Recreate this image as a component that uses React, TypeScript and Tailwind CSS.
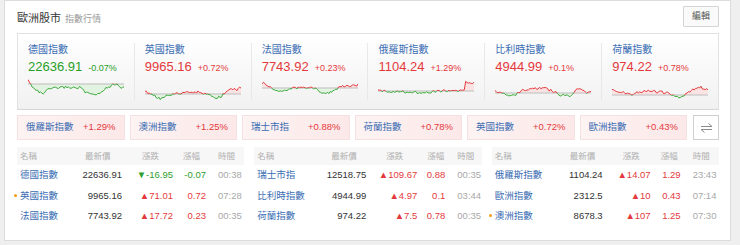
import React from 'react';

type Anchor = [number, number];

const RED = '#e4393c';
const GREEN = '#2f9e2f';

const cards: { name: string; value: string; change: string; up: boolean; base: number; anchors: Anchor[]; seed: number }[] = [
    {
        name: '德國指數', value: '22636.91', change: '-0.07%', up: false, base: 5, seed: 3,
        anchors: [[0, 1], [0.03, 6], [0.1, 12], [0.15, 15], [0.22, 10], [0.3, 9], [0.4, 8], [0.5, 9], [0.55, 8], [0.6, 14], [0.7, 16], [0.75, 14], [0.8, 10], [0.86, 7], [0.9, 5], [0.93, 4], [0.96, 9], [1, 7]],
    },
    {
        name: '英國指數', value: '9965.16', change: '+0.72%', up: true, base: 15, seed: 7,
        anchors: [[0, 13], [0.05, 14], [0.12, 18], [0.17, 20], [0.22, 16], [0.4, 14], [0.55, 13], [0.65, 16], [0.75, 19], [0.8, 17], [0.85, 12], [0.9, 10], [0.95, 11], [1, 8]],
    },
    {
        name: '法國指數', value: '7743.92', change: '+0.23%', up: true, base: 9, seed: 11,
        anchors: [[0, 4], [0.08, 7], [0.15, 12], [0.25, 11], [0.35, 9], [0.45, 8], [0.55, 9], [0.62, 13], [0.7, 14], [0.76, 11], [0.82, 8], [0.88, 6], [0.94, 7], [1, 6]],
    },
    {
        name: '俄羅斯指數', value: '1104.24', change: '+1.29%', up: true, base: 12, seed: 5,
        anchors: [[0, 12], [0.2, 12.5], [0.35, 13], [0.5, 13.5], [0.6, 12.5], [0.7, 11.5], [0.9, 12], [0.91, 3], [1, 3.5]],
    },
    {
        name: '比利時指數', value: '4944.99', change: '+0.1%', up: true, base: 14, seed: 13,
        anchors: [[0, 12], [0.07, 14], [0.15, 18], [0.22, 15], [0.3, 11], [0.5, 9], [0.6, 12], [0.68, 16], [0.78, 17], [0.82, 13], [0.85, 10], [0.93, 11], [0.96, 14], [1, 13]],
    },
    {
        name: '荷蘭指數', value: '974.22', change: '+0.78%', up: true, base: 16, seed: 17,
        anchors: [[0, 10], [0.1, 13], [0.2, 15], [0.35, 12], [0.5, 13], [0.6, 14], [0.66, 18], [0.72, 18], [0.78, 14], [0.85, 10], [0.92, 8], [0.96, 10], [1, 10]],
    },
];

const pills = [
    { name: '俄羅斯指數', pct: '+1.29%' },
    { name: '澳洲指數', pct: '+1.25%' },
    { name: '瑞士市指', pct: '+0.88%' },
    { name: '荷蘭指數', pct: '+0.78%' },
    { name: '英國指數', pct: '+0.72%' },
    { name: '歐洲指數', pct: '+0.43%' },
];

type Row = { name: string; price: string; change: string; pct: string; time: string; up: boolean; dot?: boolean };

const tables: { cols: string; rows: Row[] }[] = [
    {
        cols: 'grid-cols-[63px_46px_51px_33px_34px]',
        rows: [
            { name: '德國指數', price: '22636.91', change: '▼-16.95', pct: '-0.07', time: '00:38', up: false },
            { name: '英國指數', price: '9965.16', change: '▲71.01', pct: '0.72', time: '07:28', up: true, dot: true },
            { name: '法國指數', price: '7743.92', change: '▲17.72', pct: '0.23', time: '00:35', up: true },
        ],
    },
    {
        cols: 'grid-cols-[72px_44px_51px_28px_32px]',
        rows: [
            { name: '瑞士市指', price: '12518.75', change: '▲109.67', pct: '0.88', time: '00:35', up: true },
            { name: '比利時指數', price: '4944.99', change: '▲4.97', pct: '0.1', time: '03:44', up: true },
            { name: '荷蘭指數', price: '974.22', change: '▲7.5', pct: '0.78', time: '00:35', up: true },
        ],
    },
    {
        cols: 'grid-cols-[73px_42px_48px_30px_34px]',
        rows: [
            { name: '俄羅斯指數', price: '1104.24', change: '▲14.07', pct: '1.29', time: '23:43', up: true },
            { name: '歐洲指數', price: '2312.5', change: '▲10', pct: '0.43', time: '07:14', up: true },
            { name: '澳洲指數', price: '8678.3', change: '▲107', pct: '1.25', time: '07:30', up: true, dot: true },
        ],
    },
];

// deterministic wobble so the lines look like intraday ticks
const noise = (i: number, seed: number) => {
    const v = Math.sin(i * 12.9898 + seed * 78.233) * 43758.5453;
    return v - Math.floor(v) - 0.5;
};

const buildPath = (anchors: Anchor[], seed: number, w: number) => {
    const n = 70;
    const pts: string[] = [];
    for (let i = 0; i < n; i++) {
        const t = i / (n - 1);
        let k = 0;
        while (k < anchors.length - 2 && anchors[k + 1][0] < t) k++;
        const [t0, y0] = anchors[k];
        const [t1, y1] = anchors[k + 1];
        const f = t1 === t0 ? 0 : Math.min(1, Math.max(0, (t - t0) / (t1 - t0)));
        const y = Math.min(21.5, Math.max(0.5, y0 + (y1 - y0) * f + noise(i, seed) * 2.4));
        pts.push(`${(t * w).toFixed(1)} ${y.toFixed(1)}`);
    }
    return pts;
};

const Sparkline: React.FC<{ id: number; base: number; anchors: Anchor[]; seed: number }> = ({ id, base, anchors, seed }) => {
    const w = 96;
    const h = 22;
    const pts = buildPath(anchors, seed, w);
    const line = 'M' + pts.join(' L');
    const area = `${line} L${w} ${base} L0 ${base} Z`;
    return (
        <svg width={w} height={h} viewBox={`0 0 ${w} ${h}`} className="block">
            <defs>
                <clipPath id={`up${id}`}>
                    <rect x="0" y="0" width={w} height={base} />
                </clipPath>
                <clipPath id={`dn${id}`}>
                    <rect x="0" y={base} width={w} height={h - base} />
                </clipPath>
            </defs>
            <g clipPath={`url(#up${id})`}>
                <path d={area} fill="#fbe3e3" />
            </g>
            <g clipPath={`url(#dn${id})`}>
                <path d={area} fill="#e3f3e1" />
            </g>
            <line x1="0" y1={base} x2={w} y2={base} stroke="#bdbdbd" strokeWidth="1" />
            <g clipPath={`url(#up${id})`}>
                <path d={line} fill="none" stroke={RED} strokeWidth="1" />
            </g>
            <g clipPath={`url(#dn${id})`}>
                <path d={line} fill="none" stroke="#3aa83a" strokeWidth="1" />
            </g>
        </svg>
    );
};

const SwapIcon = () => (
    <svg width="13" height="10" viewBox="0 0 13 10" fill="none" stroke="#8c8c8c" strokeWidth="1">
        <path d="M1 3.5 H12 L8.5 0.5" />
        <path d="M12 6.5 H1 L4.5 9.5" />
    </svg>
);

const App: React.FC = () => {
    return (
        <div className="w-[740px] h-[245px] bg-[#efefef] pl-[4px] font-['Liberation_Sans','Noto_Sans_CJK_TC',sans-serif]">
            <div className="w-[727px] h-[241px] bg-white border border-[#dcdcdc] pl-[12px] pr-[11px]">
                {/* title */}
                <div className="flex items-center justify-between mt-[5px] h-[21px]">
                    <div className="flex items-baseline pt-[3px]">
                        <span className="text-[11px] text-[#333]">歐洲股市</span>
                        <span className="ml-[4px] text-[9px] text-[#9a9a9a]">指數行情</span>
                    </div>
                    <button className="h-[21px] w-[36px] border border-[#d4d4d4] bg-[#fafafa] text-[9px] text-[#555] rounded-[1px]">
                        編輯
                    </button>
                </div>

                {/* chart cards */}
                <div className="mt-[6px] h-[77px] flex items-center border border-[#e2e2e2] border-b-[#d6d6d6] bg-gradient-to-b from-white to-[#f1f1f1]">
                    {cards.map((c, i) => (
                        <React.Fragment key={c.name}>
                            {i > 0 && <div className="w-px h-[57px] bg-[#e8e8e8]" />}
                            <div className="flex-1 h-full pl-[10px] pt-[9px]">
                                <div className="text-[10px] leading-[14px] text-[#3a6db3]">{c.name}</div>
                                <div className={`mt-[1px] flex items-baseline leading-[18px] ${c.up ? 'text-[#e4393c]' : 'text-[#27a027]'}`}>
                                    <span className="text-[13px]">{c.value}</span>
                                    <span className="ml-[6px] text-[9px]">{c.change}</span>
                                </div>
                                <div className="mt-[2px]">
                                    <Sparkline id={i} base={c.base} anchors={c.anchors} seed={c.seed} />
                                </div>
                            </div>
                        </React.Fragment>
                    ))}
                </div>

                {/* quick pills */}
                <div className="mt-[5px] flex gap-[5px] h-[25px]">
                    {pills.map((p) => (
                        <div
                            key={p.name}
                            className="flex-1 flex items-center justify-between px-[8px] border border-[#f5e1e1] bg-gradient-to-r from-[#fdf3f3] to-[#fce8e8] text-[9.5px]"
                        >
                            <span className="text-[#3a6db3]">{p.name}</span>
                            <span style={{ color: RED }}>{p.pct}</span>
                        </div>
                    ))}
                    <button className="w-[26px] ml-[1px] flex items-center justify-center border border-[#cfcfcf] bg-white">
                        <SwapIcon />
                    </button>
                </div>

                {/* tables */}
                <div className="mt-[7px] grid grid-cols-3 gap-[10px]">
                    {tables.map((t, ti) => (
                        <div key={ti} className="text-[9.5px]">
                            <div className={`grid ${t.cols} h-[18px] items-center bg-[#f7f7f7] text-[8.5px] text-[#b0b0b0]`}>
                                <span className="pl-[3px]">名稱</span>
                                <span className="pl-[5px]">最新價</span>
                                <span className="pl-[16px]">漲跌</span>
                                <span className="pl-[6px]">漲幅</span>
                                <span className="pl-[8px]">時間</span>
                            </div>
                            {t.rows.map((r) => (
                                <div key={r.name} className={`grid ${t.cols} h-[20.5px] items-center`}>
                                    <span className="relative pl-[3px] text-[#3a6db3] whitespace-nowrap">
                                        {r.dot && <span className="absolute left-[-3px] top-[5px] w-[3px] h-[3px] rounded-full bg-[#f39c12]" />}
                                        {r.name}
                                    </span>
                                    <span className="text-right pr-[4px] text-[#333]">{r.price}</span>
                                    <span className={`text-right pr-[4px] ${r.up ? 'text-[#e4393c]' : 'text-[#2f9e2f]'}`}>{r.change}</span>
                                    <span className={`text-right pr-[4px] ${r.up ? 'text-[#e4393c]' : 'text-[#2f9e2f]'}`}>{r.pct}</span>
                                    <span className="pl-[8px] text-[#a8a8a8]">{r.time}</span>
                                </div>
                            ))}
                        </div>
                    ))}
                </div>
            </div>
        </div>
    );
};

export default App;
